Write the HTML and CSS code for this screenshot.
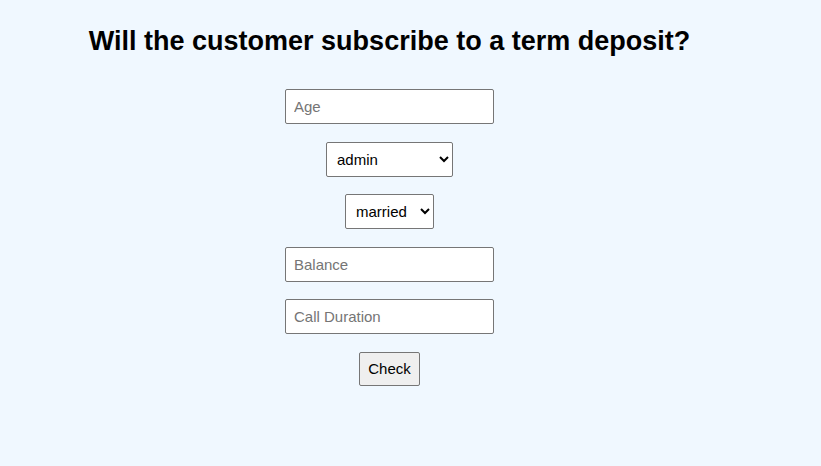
FILE: index.html
```html
<!DOCTYPE html>
<html>
<head>
<meta charset="utf-8">
<title>Term Deposit Prediction</title>
<link rel="stylesheet" href="styles.css">
</head>
<body>
<div class="page">
  <h1 class="title">Will the customer subscribe to a term deposit?</h1>
  <form class="form">
    <input class="field" type="text" placeholder="Age">
    <select class="choice choice-job">
      <option>admin</option>
      <option>blue-collar</option>
      <option>entrepreneur</option>
      <option>housemaid</option>
      <option>management</option>
      <option>retired</option>
      <option>self-employed</option>
      <option>services</option>
      <option>student</option>
      <option>technician</option>
      <option>unemployed</option>
    </select>
    <select class="choice choice-marital">
      <option>married</option>
      <option>single</option>
      <option>divorced</option>
    </select>
    <input class="field" type="text" placeholder="Balance">
    <input class="field" type="text" placeholder="Call Duration">
    <button class="btn" type="button">Check</button>
  </form>
</div>
</body>
</html>
```

FILE: styles.css
```css
html, body {
  margin: 0;
  padding: 0;
  background: #f0f8ff;
  font-family: "Liberation Sans", Arial, sans-serif;
}
.page {
  width: 779px;
  padding-top: 26px;
  display: flex;
  flex-direction: column;
  align-items: center;
}
.title {
  margin: 0;
  font-size: 27px;
  line-height: 30px;
  font-weight: bold;
  color: #000;
}
.form {
  margin-top: 33px;
  display: flex;
  flex-direction: column;
  align-items: center;
  gap: 17.6px;
}
.field {
  box-sizing: border-box;
  width: 209px;
  height: 35px;
  padding: 0 8px;
  border: 1px solid #767676;
  border-radius: 2px;
  background: #fff;
  font-family: "Liberation Sans", Arial, sans-serif;
  font-size: 15px;
  color: #000;
}
.field::placeholder {
  color: #757575;
}
.choice {
  box-sizing: border-box;
  height: 35px;
  padding: 0 5px 0 6px;
  border: 1px solid #767676;
  border-radius: 2px;
  background: #fff;
  font-family: "Liberation Sans", Arial, sans-serif;
  font-size: 15px;
  color: #000;
}
.choice-job { width: 127px; }
.choice-marital { width: 89px; }
.btn {
  box-sizing: border-box;
  width: 61px;
  height: 34px;
  padding: 0;
  border: 1px solid #767676;
  border-radius: 2px;
  background: #efefef;
  font-family: "Liberation Sans", Arial, sans-serif;
  font-size: 15px;
  color: #000;
}
```
